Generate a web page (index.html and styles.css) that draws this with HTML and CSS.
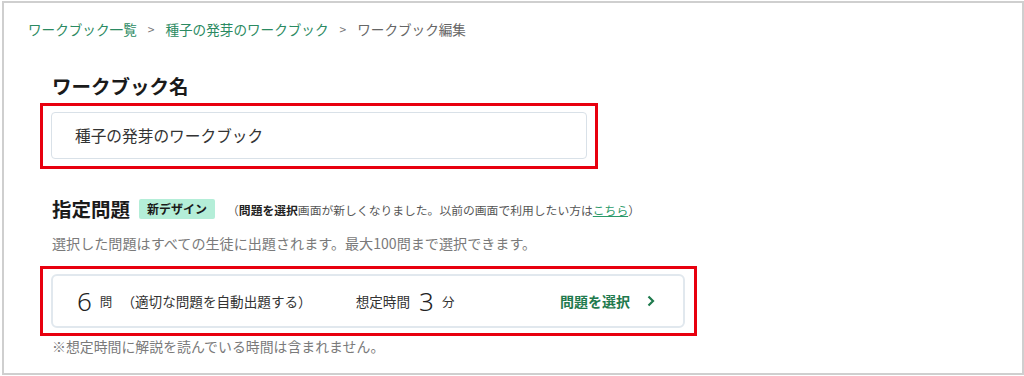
FILE: index.html
```html
<!DOCTYPE html>
<html lang="ja">
<head>
  <meta charset="utf-8">
  <link rel="stylesheet" href="styles.css">
</head>
<body>
  <div class="frame">
    <nav class="crumbs">
      <a class="crumb-link">ワークブック一覧</a>
      <span class="crumb-sep">&gt;</span>
      <a class="crumb-link">種子の発芽のワークブック</a>
      <span class="crumb-sep">&gt;</span>
      <span class="crumb-here">ワークブック編集</span>
    </nav>

    <section class="main">
      <h2 class="field-title">ワークブック名</h2>
      <div class="mark">
        <div class="name-input">種子の発芽のワークブック</div>
      </div>

      <div class="q-head">
        <h2 class="field-title">指定問題</h2>
        <span class="badge">新デザイン</span>
        <span class="q-note">（<b>問題を選択</b>画面が新しくなりました。以前の画面で利用したい方は<a class="green-link">こちら</a>）</span>
      </div>
      <p class="q-desc">選択した問題はすべての生徒に出題されます。最大100問まで選択できます。</p>

      <div class="mark mark-wide">
        <div class="q-card">
          <span class="big-num">6</span>
          <span class="unit">問</span>
          <span class="auto">（適切な問題を自動出題する）</span>
          <span class="time-label">想定時間</span>
          <span class="big-num">3</span>
          <span class="unit">分</span>
          <a class="select-btn">問題を選択
            <svg class="chev" width="8" height="12" viewBox="0 0 8 12"><polyline points="1.5,1.5 6,6 1.5,10.5" fill="none" stroke="#1f7a4d" stroke-width="2.2"/></svg>
          </a>
        </div>
      </div>
      <p class="q-foot">※想定時間に解説を読んでいる時間は含まれません。</p>
    </section>
  </div>
</body>
</html>
```

FILE: styles.css
```css
* {
    margin: 0;
    padding: 0;
    box-sizing: border-box;
}

body {
    background: #fff;
    font-family: "Noto Sans CJK JP", "Noto Sans", sans-serif;
    color: #333;
}

.frame {
    margin: 1px 0 0 2px;
    width: 1022px;
    height: 374px;
    border: 2px solid #cfcfcf;
    padding: 16px 24px 0;
}

/* breadcrumb */
.crumbs {
    font-size: 13.6px;
    line-height: 20px;
    display: flex;
    gap: 11px;
}
.crumb-link { color: #2b8a62; }
.crumb-sep { color: #777; font-size: 12px; }
.crumb-here { color: #666; }

.main {
    padding-left: 12px;
}

.field-title {
    font-size: 19.5px;
    font-weight: bold;
    line-height: 28px;
    color: #1a1a1a;
    margin-left: 12px;
}
.main > .field-title {
    margin-top: 33px;
    margin-bottom: 3px;
}

/* red annotation frames */
.mark {
    width: 558px;
    border: 3px solid #e8000f;
    padding: 6px 8px 7px;
}
.mark-wide {
    width: 657px;
    padding: 5px 9px 5px 8px;
}

.name-input {
    height: 47px;
    border: 1px solid #d9e1e8;
    border-radius: 4px;
    padding-left: 23px;
    display: flex;
    align-items: center;
    font-size: 15.7px;
    color: #333;
}

.q-head {
    margin-top: 26px;
    display: flex;
    align-items: center;
    height: 28px;
}
.badge {
    margin-left: 9px;
    background: #b4eed8;
    color: #1a1a1a;
    font-size: 12px;
    font-weight: bold;
    line-height: 20px;
    padding: 0 8px;
    border-radius: 2px;
}
.q-note {
    margin-left: 12px;
    font-size: 11.8px;
    color: #555;
}
.q-note b { color: #222; }
.green-link {
    color: #2b9a6a;
    text-decoration: underline;
}

.q-desc {
    margin: 10px 0 13px 12px;
    font-size: 14.1px;
    line-height: 20px;
    color: #7a7a7a;
}

.q-card {
    height: 54px;
    border: 2px solid #e1e8ee;
    border-radius: 6px;
    padding: 0 28px 0 24px;
    display: flex;
    align-items: center;
}
.big-num {
    font-family: "Noto Sans", sans-serif;
    font-weight: 300;
    font-size: 26px;
    color: #222;
    line-height: 1;
}
.unit {
    font-size: 12.5px;
    margin-left: 8px;
    color: #333;
}
.auto {
    margin-left: 9px;
    font-size: 13.6px;
    color: #333;
}
.time-label {
    margin-left: 44px;
    margin-right: 9px;
    font-size: 13.6px;
    color: #333;
}
.select-btn {
    margin-left: auto;
    display: flex;
    align-items: center;
    gap: 17px;
    color: #1f7a4d;
    font-weight: bold;
    font-size: 14px;
}

.q-foot {
    margin-left: 12px;
    font-size: 13.9px;
    line-height: 20px;
    color: #7a7a7a;
}
```
